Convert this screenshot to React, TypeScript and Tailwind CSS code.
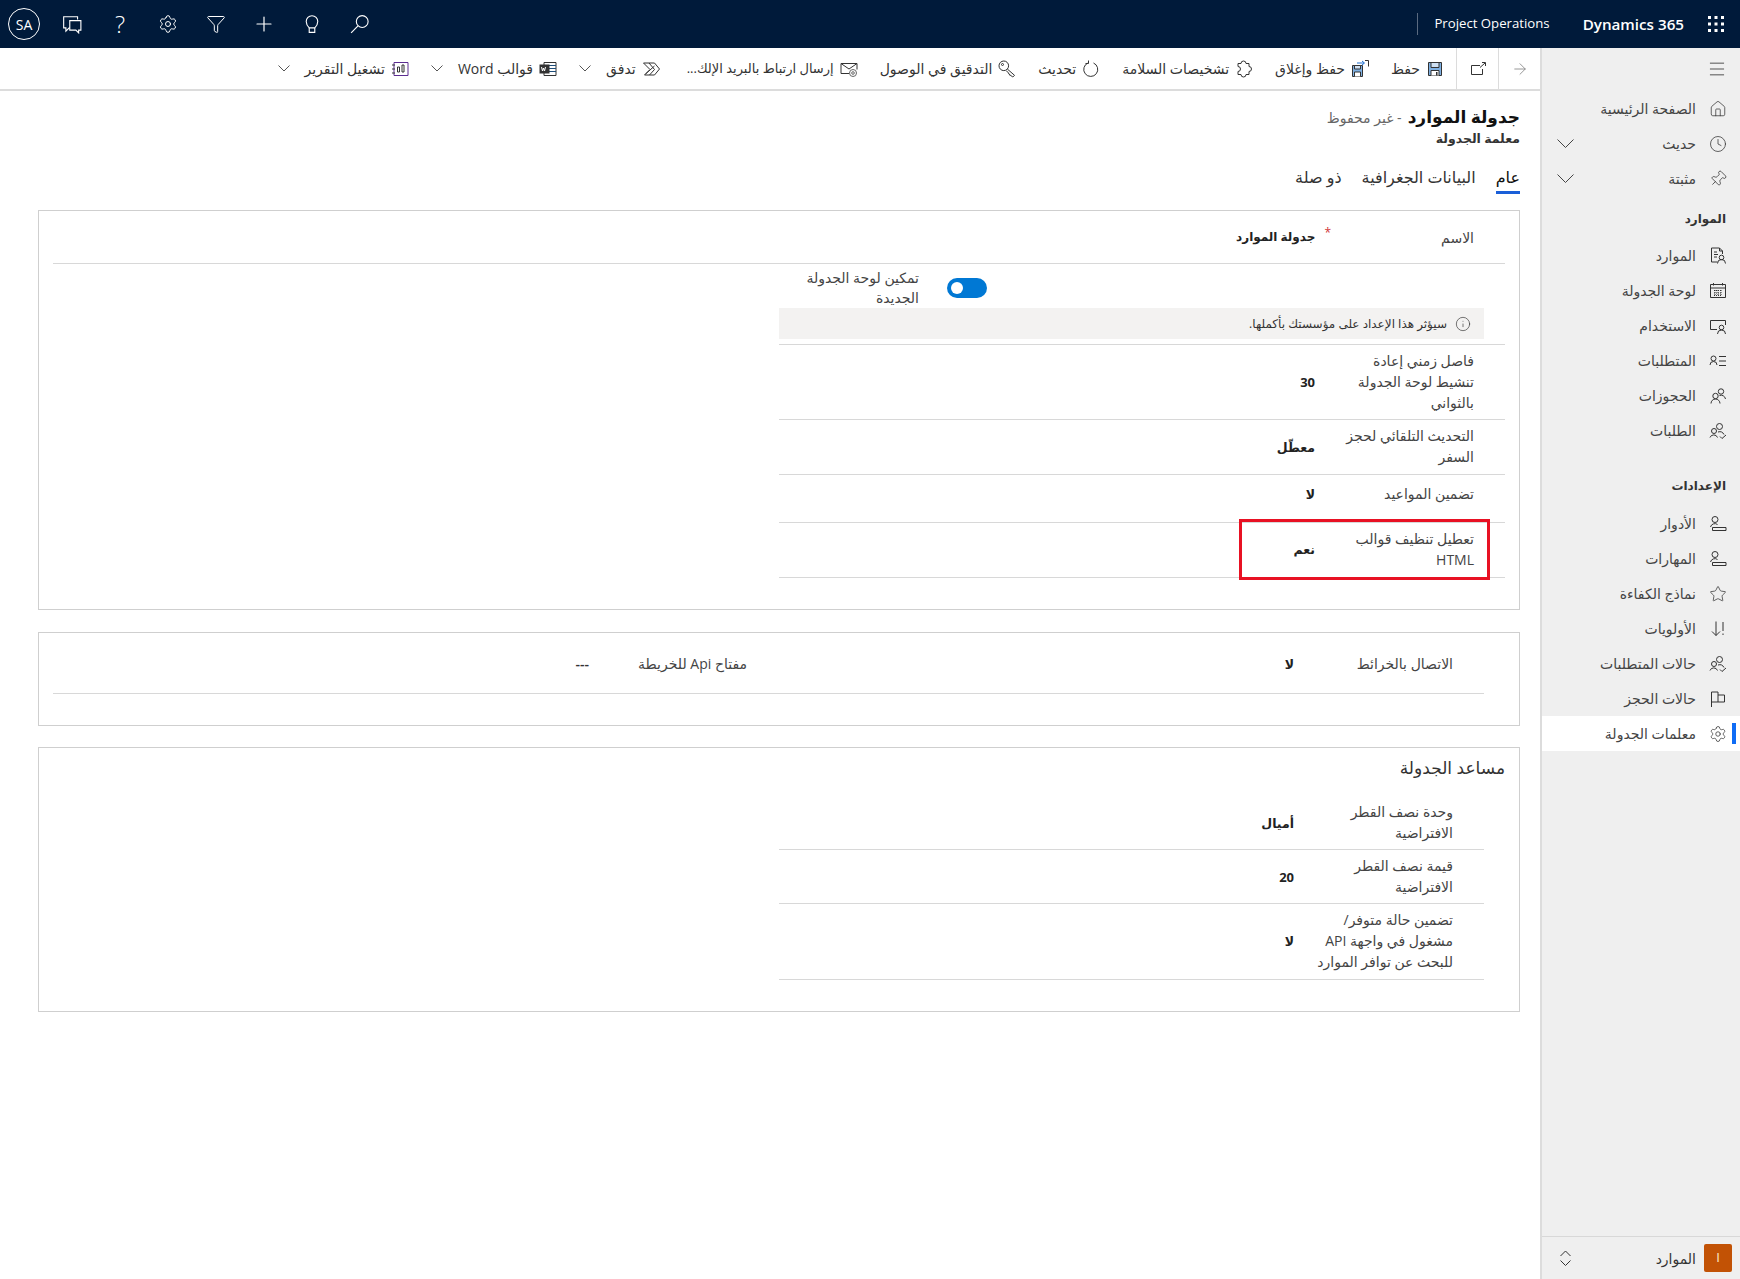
import React from 'react';
import { ArrowRight, Clock, Filter, Home, Info, Menu, Pin, Plus, Settings, Star } from 'lucide-react';

const FONT = "font-['Open_Sans','Noto_Sans','DejaVu_Sans',sans-serif]";

type IconProps = { className?: string };

const Svg: React.FC<IconProps & { children: React.ReactNode; size?: number }> = ({ className, children, size = 18 }) => (
  <svg width={size} height={size} viewBox="0 0 18 18" fill="none" stroke="currentColor" strokeWidth="1" className={className}>
    {children}
  </svg>
);

const Chev: React.FC<{ w: number; up?: boolean; className?: string }> = ({ w, up, className }) => (
  <svg width={w} height={w / 2 + 1} viewBox={`0 0 ${w} ${w / 2 + 1}`} fill="none" stroke="currentColor" strokeWidth="1" className={className}>
    <path d={up ? `M0.5 ${w / 2 + 0.5}L${w / 2} 1L${w - 0.5} ${w / 2 + 0.5}` : `M0.5 0.5L${w / 2} ${w / 2}L${w - 0.5} 0.5`} />
  </svg>
);

const SaveIcon = () => (
  <Svg><path d="M2.5 2.5h13v13h-13z" fill="#7fb0e2" stroke="#333" /><path d="M5 2.5h8v5H5z" fill="#cfe0f2" stroke="#333" /><path d="M5 15.5v-5h8v5" fill="#fff" stroke="#333" /><path d="M10 12h1.5v3.5H10z" fill="#333" stroke="none" /></Svg>
);
const SaveCloseIcon = () => (
  <Svg><path d="M1.5 5.5h10v11h-10z" fill="#7fb0e2" stroke="#333" /><path d="M3.5 5.5h6v3.5h-6z" fill="#cfe0f2" stroke="#333" /><path d="M3.5 16.5v-4.5h6v4.5" fill="#fff" stroke="#333" /><path d="M6 3h7M11 1l2.5 2-2.5 2" stroke="#1f6fd0" /><path d="M14 0.5h3.5v6" stroke="#333" /></Svg>
);
const PuzzleIcon = () => (
  <Svg><path d="M6 3.5a2.5 2.5 0 0 1 5 0h3v3a2.5 2.5 0 0 1 0 5v3h-3a2.5 2.5 0 0 1-5 0H3v-3a2.5 2.5 0 0 0 0-5v-3z" /></Svg>
);
const RefreshIcon = () => (
  <Svg><path d="M11.5 3a7 7 0 1 1-5.5 0" /><path d="M6.5 0.5v3h-3" /></Svg>
);
const KeyIcon = () => (
  <Svg><circle cx="5.8" cy="5.8" r="4.8" /><circle cx="4.5" cy="4.5" r="1" /><path d="M9.3 9l7.2 6.3-1.7 1.7-2-1.5-1-.2-.3-1.3-1-.3-.2-1.2-2-1.5" /></Svg>
);
const MailLinkIcon = () => (
  <Svg><path d="M1 3.5h16v6M1 3.5v10h8M1 3.5l8 5.5 8-5.5" /><circle cx="13" cy="13" r="3.5" stroke="#666" /><circle cx="13" cy="13" r="1.3" stroke="#666" /></Svg>
);
const FlowIcon = () => (
  <Svg><path d="M1.5 3h11l5 6-5 6H2.5l5.5-5.5z" /><path d="M7 3l5.5 6.5-5 5.5M3.5 14l9-8" /></Svg>
);
const WordIcon = () => (
  <Svg><path d="M5 2.5h12v13H5z" /><path d="M10 5.5h7M10 8.5h7M10 11.5h7" stroke="#1f4e79" /><rect x="1" y="5" width="9" height="8" fill="#333" stroke="#333" /><path d="M2.5 7l1 4 1-3 1 3 1-4" stroke="#fff" /></Svg>
);
const ReportIcon = () => (
  <Svg><path d="M3 2.5h14v13H3z" stroke="#5c2d91" /><path d="M6.5 12V7h2v5zM11 12V5h2v7z" stroke="#333" /><path d="M1 5h3M1 9h3M1 13h3" stroke="#333" /></Svg>
);
const PopoutIcon = () => (
  <Svg><path d="M11 5.5H2.5v9h11V9" /><path d="M11 7.5l5-4.5M13 2.5h3.5V6" /></Svg>
);
const FeedbackIcon = () => (
  <Svg size={20} className="text-white"><path d="M14 5V2.5H1.5v10h2v3l3-3H7" /><path d="M7 6h10v8.5h-2v2.5l-2.5-2.5H7z" /></Svg>
);
const WaffleIcon = () => (
  <svg width="16" height="16" viewBox="0 0 16 16" fill="#fff">
    {[0, 6.5, 13].map((y) => [0, 6.5, 13].map((x) => <rect key={`${x}-${y}`} x={x} y={y} width="3" height="3" />))}
  </svg>
);
const BulbIcon = () => (
  <Svg size={20}><path d="M6.5 12.5C5 11 3.8 9.2 3.8 6.8a5.2 5.2 0 0 1 10.4 0c0 2.4-1.2 4.2-2.7 5.7z" /><path d="M6.5 12.5v4h5v-4" /></Svg>
);
const SearchIcon = () => (
  <Svg size={20}><circle cx="11" cy="6.8" r="5.3" /><path d="M7.2 10.6L1 17" /></Svg>
);

const PersonDoc = () => (
  <Svg><path d="M13.5 7V4l-3-3h-8v14h6" /><path d="M10.5 1v3h3M5 5h3M5 7.5h4M5 10h3" /><circle cx="12.5" cy="10.5" r="2.3" /><path d="M8.5 16.5a4 4 0 0 1 8 0" /></Svg>
);
const Calendar = () => (
  <Svg><path d="M1.5 2.5h15v13h-15zM1.5 6h15M4.5 1v2.5M13.5 1v2.5" /><path d="M5 8.5h8M5 11h8M5 13.5h8M6 8v6M9 8v6M12 8v6" strokeDasharray="1 1" /></Svg>
);
const ScreenPerson = () => (
  <Svg><path d="M8 12.5H1.5v-9h15v4.5" /><circle cx="12.5" cy="10.5" r="2.3" /><path d="M8.5 17a4 4 0 0 1 8 0" /></Svg>
);
const PersonList = () => (
  <Svg><circle cx="4.5" cy="6.5" r="2.5" /><path d="M1 13a3.5 3.5 0 0 1 7 0M10 4.5h7M10 9h7M10 13.5h7" /></Svg>
);
const TwoPeople = () => (
  <Svg><circle cx="6.5" cy="9" r="2.7" /><path d="M2 16.5a4.5 4.5 0 0 1 9 0" /><circle cx="12" cy="4.5" r="2.7" /><path d="M10.5 8.5a4.5 4.5 0 0 1 6 3.5" /></Svg>
);
const PeopleCheck = () => (
  <Svg><circle cx="5" cy="9" r="2.5" /><path d="M1 15.5a4 4 0 0 1 7.5 0" /><circle cx="10.5" cy="4.5" r="3" /><path d="M9 10a5 5 0 0 1 6 2.5M11 14.5l2 2 4-3.5" /></Svg>
);
const PersonBar = () => (
  <Svg><circle cx="6" cy="4.5" r="3" /><path d="M1.5 12a4.5 4.5 0 0 1 7-2.5M3.5 12.5h13.5v3H3.5z" /></Svg>
);
const Priority = () => (
  <Svg><path d="M7 1.5v14M3 11.5l4 4 4-4M14 2v9M14 13.5v1.5" /></Svg>
);
const FlagIcon = () => (
  <Svg><path d="M2.5 17V2h6.5v3h6.5v7H9v-7M2.5 12H9" /></Svg>
);

const bar = [
  { label: 'حفظ', icon: <SaveIcon /> },
  { label: 'حفظ وإغلاق', icon: <SaveCloseIcon /> },
  { label: 'تشخيصات السلامة', icon: <PuzzleIcon /> },
  { label: 'تحديث', icon: <RefreshIcon /> },
  { label: 'التدقيق في الوصول', icon: <KeyIcon /> },
  { label: 'إرسال ارتباط بالبريد الإلك...', icon: <MailLinkIcon />, small: true },
  { label: 'تدفق', icon: <FlowIcon />, more: true },
  { label: 'قوالب Word', icon: <WordIcon />, more: true },
  { label: 'تشغيل التقرير', icon: <ReportIcon />, more: true },
];

const nav1 = [
  { label: 'الموارد', icon: <PersonDoc /> },
  { label: 'لوحة الجدولة', icon: <Calendar /> },
  { label: 'الاستخدام', icon: <ScreenPerson /> },
  { label: 'المتطلبات', icon: <PersonList /> },
  { label: 'الحجوزات', icon: <TwoPeople /> },
  { label: 'الطلبات', icon: <PeopleCheck /> },
];

const nav2 = [
  { label: 'الأدوار', icon: <PersonBar /> },
  { label: 'المهارات', icon: <PersonBar /> },
  { label: 'نماذج الكفاءة', icon: <Star size={18} strokeWidth={1} /> },
  { label: 'الأولويات', icon: <Priority /> },
  { label: 'حالات المتطلبات', icon: <PeopleCheck /> },
  { label: 'حالات الحجز', icon: <FlagIcon /> },
];

const NavItem: React.FC<{ label: string; icon: React.ReactNode; more?: boolean; active?: boolean }> = ({ label, icon, more, active }) => (
  <div className={`relative flex h-[35px] items-center pr-[13px] text-[14px] text-[#444] ${active ? 'bg-white' : ''}`}>
    <span className="flex w-[18px] justify-center text-[#333]">{icon}</span>
    <span className="mr-[13px] flex-1 whitespace-nowrap">{label}</span>
    {more && <Chev w={17} className="ml-[15px] text-[#444]" />}
    {active && <span className="absolute right-[4px] top-[7px] h-[21px] w-[4px] bg-[#0f6cf5]" />}
  </div>
);

const Row: React.FC<{ label: React.ReactNode; value: string; h: string; digits?: boolean; extra?: string }> = ({ label, value, h, digits, extra = '' }) => (
  <div className={`flex items-center border-b border-[#d8d8d8] pr-[31px] ${h} ${extra}`}>
    <div className="w-[159px] shrink-0 text-[14px] leading-[21px] text-[#444]">{label}</div>
    <div className={`translate-y-[2px] font-bold text-[#222] ${digits ? 'text-[13px]' : 'text-[12.5px]'}`}>{value}</div>
  </div>
);

export default function App() {
  return (
    <div dir="rtl" className={`flex h-screen flex-col overflow-hidden bg-white ${FONT}`}>
      <header dir="ltr" className="flex h-[48px] shrink-0 items-center bg-[#001a3a] text-white">
        <div className="flex w-[48px] justify-center">
          <div className="flex h-[32px] w-[32px] items-center justify-center rounded-full border border-white text-[14px]">SA</div>
        </div>
        <div className="flex w-[48px] justify-center"><FeedbackIcon /></div>
        <div className="flex w-[48px] justify-center text-[24px] font-light leading-none">?</div>
        <div className="flex w-[48px] justify-center"><Settings size={20} strokeWidth={1.2} /></div>
        <div className="flex w-[48px] justify-center"><Filter size={20} strokeWidth={1.2} /></div>
        <div className="flex w-[48px] justify-center"><Plus size={24} strokeWidth={1.2} /></div>
        <div className="flex w-[48px] justify-center"><BulbIcon /></div>
        <div className="flex w-[48px] justify-center"><SearchIcon /></div>
        <div className="ml-auto h-[22px] w-px bg-[#5a6a80]" />
        <div className="ml-[16px] text-[13.2px]">Project Operations</div>
        <div className="ml-[33px] text-[15.2px] font-semibold">Dynamics 365</div>
        <div className="ml-[24px] mr-[16px]"><WaffleIcon /></div>
      </header>

      <div className="flex min-h-0 flex-1">
        <aside className="flex w-[200px] shrink-0 flex-col border-l-2 border-[#dcdcdc] bg-[#efefef]">
          <div className="flex h-[42px] items-center pr-[13px] text-[#333]"><Menu size={20} strokeWidth={1} /></div>
          <div className="pt-[1px]">
            <NavItem label="الصفحة الرئيسية" icon={<Home size={18} strokeWidth={1} />} />
            <NavItem label="حديث" icon={<Clock size={18} strokeWidth={1} />} more />
            <NavItem label="مثبتة" icon={<Pin size={18} strokeWidth={1} className="rotate-45" />} more />
          </div>
          <div className="mt-[3px] flex h-[39px] items-center pr-[14px] text-[12px] font-semibold text-[#333]">الموارد</div>
          {nav1.map((n) => <NavItem key={n.label} {...n} />)}
          <div className="mt-[18px] flex h-[40px] items-center pr-[14px] text-[12px] font-semibold text-[#333]">الإعدادات</div>
          {nav2.map((n) => <NavItem key={n.label} {...n} />)}
          <NavItem label="معلمات الجدولة" icon={<Settings size={18} strokeWidth={1} />} active />
          <div className="mt-auto flex h-[43px] items-center border-t border-[#d8d8d8] pr-[8px] text-[14px] text-[#333]">
            <div className="flex h-[28px] w-[28px] items-center justify-center rounded-[2px] bg-[#c25205] text-[13px] text-[#ffe9c8]">I</div>
            <span className="mr-[8px] flex-1">الموارد</span>
            <div className="ml-[18px] flex flex-col items-center gap-[3px]">
              <Chev w={11} up />
              <Chev w={11} />
            </div>
          </div>
        </aside>

        <main className="flex min-w-0 flex-1 flex-col">
          <div className="flex h-[43px] shrink-0 items-center border-b-2 border-[#dcdcdc] text-[14px] text-[#333]">
            <div className="flex h-full w-[42px] items-center justify-center border-l border-[#dcdcdc] text-[#777]"><ArrowRight size={18} strokeWidth={1} /></div>
            <div className="flex h-full w-[42px] items-center justify-center border-l border-[#dcdcdc]"><PopoutIcon /></div>
            <div className="flex items-center gap-[22px] pr-[12px]">
              {bar.map((b) => (
                <div key={b.label} className={`flex items-center whitespace-nowrap ${b.small ? 'ml-[5px]' : ''}`}>
                  {b.icon}
                  <span className={`mr-[6px] ${b.small ? 'text-[13px]' : ''}`}>{b.label}</span>
                  {b.more && <Chev w={12} className="mr-[15px] text-[#555]" />}
                </div>
              ))}
            </div>
          </div>

          <div className="px-[20px] pt-[13px]">
            <div className="flex items-baseline leading-[26px]">
              <h1 className="text-[17px] font-semibold text-[#111]">جدولة الموارد</h1>
              <span className="mr-[6px] text-[14px] text-[#666]">- غير محفوظ</span>
            </div>
            <div className="text-[12.5px] font-semibold leading-[16px] text-[#333]">معلمة الجدولة</div>
            <div className="mt-[18px] flex gap-[20px] text-[16px] text-[#333]">
              <div className="border-b-[3px] border-[#1a5fd8] pb-[2px] text-[#111]">عام</div>
              <div>البيانات الجغرافية</div>
              <div>ذو صلة</div>
            </div>
          </div>

          <section className="ml-[38px] mr-[20px] mt-[16px] h-[400px] border border-[#cfcfcf] px-[14px]">
            <div className="flex h-[53px] items-center border-b border-[#d8d8d8] pr-[31px]">
              <div className="w-[159px] text-[14px] text-[#444]">الاسم</div>
              <div className="-mr-[16px] -mt-[8px] ml-[9px] text-[12px] text-[#d13438]">*</div>
              <div className="text-[12px] font-bold text-[#222]">جدولة الموارد</div>
            </div>
            <div className="w-[726px]">
              <div className="flex h-[44px] items-center pr-[518px] pt-[3px]">
                <div className="flex h-[20px] w-[40px] shrink-0 items-center justify-end rounded-full bg-[#0078d4]">
                  <span className="ml-[4px] h-[12px] w-[12px] rounded-full bg-white" />
                </div>
                <div className="mr-[28px] text-[14px] leading-[20px] text-[#444]">تمكين لوحة الجدولة<br />الجديدة</div>
              </div>
              <div className="mr-[21px] flex h-[31px] items-center bg-[#f3f2f1] pr-[13px] text-[12px] text-[#333]">
                <Info size={16} strokeWidth={1} />
                <span className="mr-[8px]">سيؤثر هذا الإعداد على مؤسستك بأكملها.</span>
              </div>
              <div className="h-[6px] border-b border-[#d8d8d8]" />
              <Row h="h-[75px]" value="30" digits extra="pb-[2px]" label={<>فاصل زمني إعادة<br />تنشيط لوحة الجدولة<br />بالثواني</>} />
              <Row h="h-[55px]" value="معطّل" extra="pb-[2px]" label={<>التحديث التلقائي لحجز<br />السفر</>} />
              <Row h="h-[48px]" value="لا" extra="pb-[10px]" label="تضمين المواعيد" />
              <div className="relative">
                <Row h="h-[55px]" value="نعم" extra="pb-[3px]" label={<>تعطيل تنظيف قوالب<br />HTML</>} />
                <div className="absolute bottom-[-2px] right-[15px] top-[-4px] w-[251px] border-[3px] border-[#e81123]" />
              </div>
            </div>
          </section>

          <section className="ml-[38px] mr-[20px] mt-[22px] h-[94px] border border-[#cfcfcf] px-[14px]">
            <div className="mr-[21px] flex h-[61px] items-center border-b border-[#d8d8d8] pr-[31px]">
              <div className="w-[159px] text-[14px] text-[#444]">الاتصال بالخرائط</div>
              <div className="w-[547px] translate-y-[2px] text-[12.5px] font-bold text-[#222]">لا</div>
              <div className="w-[158px] text-[14px] text-[#444]">مفتاح Api للخريطة</div>
              <div className="text-[14px] font-semibold text-[#333]">---</div>
            </div>
          </section>

          <section className="ml-[38px] mr-[20px] mt-[21px] h-[265px] border border-[#cfcfcf] px-[14px]">
            <h2 className="pt-[6px] text-[17px] leading-[28px] text-[#333]">مساعد الجدولة</h2>
            <div className="mr-[21px] mt-[14px] w-[705px]">
              <Row h="h-[54px]" value="أميال" extra="pb-[1px]" label={<>وحدة نصف القطر<br />الافتراضية</>} />
              <Row h="h-[54px]" value="20" digits extra="pb-[1px]" label={<>قيمة نصف القطر<br />الافتراضية</>} />
              <Row h="h-[76px]" value="لا" extra="pb-[3px]" label={<>تضمين حالة متوفر/<br />مشغول في واجهة API<br />للبحث عن توافر الموارد</>} />
            </div>
          </section>
        </main>
      </div>
    </div>
  );
}
